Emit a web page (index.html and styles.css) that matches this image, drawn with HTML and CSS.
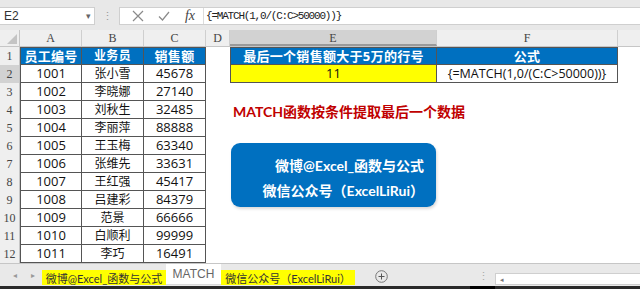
FILE: index.html
```html
<!DOCTYPE html>
<html lang="zh-CN">
  <head>
    <meta charset="utf-8" />
    <title>MATCH</title>
    <link rel="stylesheet" href="styles.css">
  </head>
  <body>
    <div class="formula-bar">
      <div class="name-box">
        <span>E2</span>
        <span class="caret">&#9662;</span>
      </div>
      <div class="grip">&#8942;</div>
      <div class="fx-box">
        <span class="icon">
          <svg width="14" height="14" viewBox="0 0 14 14"><path d="M2 2L12 12M12 2L2 12" stroke="#8a8a8a" stroke-width="1.2" fill="none"/></svg>
        </span>
        <span class="icon">
          <svg width="14" height="14" viewBox="0 0 14 14"><path d="M2 7.5L5.5 11L12 3" stroke="#8a8a8a" stroke-width="1.2" fill="none"/></svg>
        </span>
        <span class="fx">fx</span>
        <div class="formula">{=MATCH(1,0/(C:C&gt;50000))}</div>
      </div>
    </div>

    <div class="col-heads">
      <div class="corner"></div>
      <div class="col w-a">A</div>
      <div class="col w-a">B</div>
      <div class="col w-a">C</div>
      <div class="col w-d">D</div>
      <div class="col w-e selected">E</div>
      <div class="col w-f">F</div>
      <div class="col rest"></div>
    </div>

    <div class="sheet">
      <div class="left">
        <div class="rownum">1</div>
        <div class="cell head first-col top">员工编号</div>
        <div class="cell head top">业务员</div>
        <div class="cell head top">销售额</div>

        <div class="rownum selected">2</div>
        <div class="cell first-col">1001</div><div class="cell">张小雪</div><div class="cell">45678</div>
        <div class="rownum">3</div>
        <div class="cell first-col">1002</div><div class="cell">李晓娜</div><div class="cell">27140</div>
        <div class="rownum">4</div>
        <div class="cell first-col">1003</div><div class="cell">刘秋生</div><div class="cell">32485</div>
        <div class="rownum">5</div>
        <div class="cell first-col">1004</div><div class="cell">李丽萍</div><div class="cell">88888</div>
        <div class="rownum">6</div>
        <div class="cell first-col">1005</div><div class="cell">王玉梅</div><div class="cell">63340</div>
        <div class="rownum">7</div>
        <div class="cell first-col">1006</div><div class="cell">张维先</div><div class="cell">33631</div>
        <div class="rownum">8</div>
        <div class="cell first-col">1007</div><div class="cell">王红强</div><div class="cell">45417</div>
        <div class="rownum">9</div>
        <div class="cell first-col">1008</div><div class="cell">吕建彩</div><div class="cell">84379</div>
        <div class="rownum">10</div>
        <div class="cell first-col">1009</div><div class="cell">范景</div><div class="cell">66666</div>
        <div class="rownum">11</div>
        <div class="cell first-col">1010</div><div class="cell">白顺利</div><div class="cell">99999</div>
        <div class="rownum">12</div>
        <div class="cell first-col">1011</div><div class="cell">李巧</div><div class="cell">16491</div>
      </div>

      <div class="right">
        <div class="result">
          <div class="cell head first-col top">最后一个销售额大于5万的行号</div>
          <div class="cell head top">公式</div>
          <div class="cell first-col yellow">11</div>
          <div class="cell">{=MATCH(1,0/(C:C&gt;50000))}</div>
        </div>
        <div class="title">MATCH函数按条件提取最后一个数据</div>
        <div class="badge">
          <div>微博@Excel_函数与公式</div>
          <div>微信公众号（ExcelLiRui）</div>
        </div>
      </div>
    </div>

    <div class="tabs">
      <div class="nav">&#9666;</div>
      <div class="nav">&#9656;</div>
      <div class="tab marked">微博@Excel_函数与公式</div>
      <div class="tab active">MATCH</div>
      <div class="tab marked">微信公众号（ExcelLiRui）</div>
      <div class="add">
        <svg width="13" height="13" viewBox="0 0 13 13"><circle cx="6.5" cy="6.5" r="5.8" stroke="#777" fill="none"/><path d="M6.5 3.5V9.5M3.5 6.5H9.5" stroke="#555"/></svg>
      </div>
      <div class="dots">&#8942;</div>
      <div class="scroll"><span>&#9666;</span></div>
    </div>
    <div class="taskbar"><span class="seg"></span></div>
  </body>
</html>
```

FILE: styles.css
```css
body {
  margin: 0;
  width: 640px;
  height: 289px;
  overflow: hidden;
  background: #fff;
  font-family: Lato, "Noto Sans CJK SC", sans-serif;
}

/* formula bar */
.formula-bar {
  height: 30px;
  box-sizing: border-box;
  padding-top: 7px;
  display: flex;
  background: #e8e8e8;
}
.name-box {
  width: 95px;
  height: 18px;
  box-sizing: border-box;
  background: #fff;
  border: 1px solid #cfcfcf;
  border-left: none;
  display: flex;
  justify-content: space-between;
  align-items: center;
  padding: 0 3px 0 4px;
  font-family: "Liberation Sans", sans-serif;
  font-size: 12px;
  color: #333;
}
.caret {
  font-size: 9px;
  color: #666;
}
.grip {
  width: 24px;
  text-align: center;
  font-size: 11px;
  line-height: 18px;
  color: #999;
}
.fx-box {
  flex: 1;
  height: 18px;
  box-sizing: border-box;
  background: #fff;
  border: 1px solid #cfcfcf;
  border-right: none;
  display: flex;
  align-items: center;
}
.icon {
  width: 26px;
  display: flex;
  justify-content: center;
}
.icon:first-child {
  margin-left: 5px;
}
.fx {
  width: 26px;
  text-align: center;
  font-family: "Liberation Serif", serif;
  font-style: italic;
  font-size: 14px;
  color: #444;
}
.formula {
  height: 100%;
  border-left: 1px solid #dcdcdc;
  padding-left: 2px;
  font-family: "Liberation Mono", monospace;
  font-size: 11px;
  letter-spacing: -1.2px;
  line-height: 17px;
  color: #222;
}

/* column headings */
.col-heads {
  display: flex;
  height: 17px;
  background: #efefef;
  border-bottom: 1px solid #c6c6c6;
  box-sizing: border-box;
}
.corner {
  width: 20px;
  position: relative;
  border-right: 1px solid #c6c6c6;
  box-sizing: border-box;
}
.corner::after {
  content: "";
  position: absolute;
  right: 2px;
  bottom: 2px;
  border-left: 10px solid transparent;
  border-bottom: 10px solid #c4c4c4;
}
.col {
  box-sizing: border-box;
  border-right: 1px solid #cfcfcf;
  text-align: center;
  font-family: "Liberation Serif", serif;
  font-size: 12px;
  line-height: 16px;
  color: #444;
}
.w-a { width: 62px; }
.w-d { width: 24px; }
.w-e { width: 207px; }
.w-f { width: 181px; }
.rest { flex: 1; border-right: none; }
.col.selected {
  background: #d2d2d2;
  border-bottom: 2px solid #9a9a9a;
}

/* sheet */
.sheet {
  display: flex;
  height: 216px;
}
.left {
  display: grid;
  grid-template-columns: 20px 62px 62px 62px;
  grid-auto-rows: 18px;
}
.rownum {
  background: #efefef;
  border-right: 1px solid #c6c6c6;
  text-align: center;
  font-family: "Liberation Serif", serif;
  font-size: 12px;
  line-height: 18px;
  color: #444;
}
.rownum.selected {
  background: #d2d2d2;
}
.cell {
  box-sizing: border-box;
  border-right: 1px solid #555;
  border-bottom: 1px solid #555;
  text-align: center;
  font-family: "Open Sans", "Noto Sans CJK SC", sans-serif;
  font-size: 13px;
  line-height: 17px;
  color: #111;
  white-space: nowrap;
}
.left .cell:nth-child(4n+3) {
  font-size: 12px;
}
.cell.first-col { border-left: 1px solid #555; }
.cell.top { border-top: 1px solid #555; line-height: 16px; }
.cell.head {
  background: #0070c0;
  color: #fff;
  font-weight: bold;
  font-size: 13px;
  letter-spacing: 0.3px;
}
.cell.yellow { background: #ffff00; }

.right {
  margin-left: 24px;
  width: 388px;
}
.result {
  display: grid;
  grid-template-columns: 207px 181px;
  grid-auto-rows: 18px;
}
.result .cell:nth-child(4) {
  font-size: 12.5px;
}
.title {
  margin: 20px 0 0 3px;
  font-size: 14px;
  font-weight: bold;
  line-height: 18px;
  color: #c00000;
}
.badge {
  margin: 22px 0 0 1px;
  width: 205px;
  height: 64px;
  box-sizing: border-box;
  padding: 10px 12px 0 0;
  border-radius: 9px;
  background: #0070c0;
  color: #fff;
  font-weight: bold;
  font-size: 14px;
  line-height: 25px;
  text-align: right;
  box-shadow: 1px 2px 3px rgba(0, 0, 0, 0.15);
}

/* sheet tabs */
.tabs {
  height: 23px;
  box-sizing: border-box;
  border-top: 1px solid #c6c6c6;
  background: #e9e9e9;
  display: flex;
  align-items: stretch;
  font-size: 11px;
}
.nav {
  width: 18px;
  text-align: center;
  font-size: 8px;
  line-height: 22px;
  color: #999;
}
.nav:first-child { margin-left: 6px; }
.nav + .tab { margin-left: 18px; }
.tab {
  display: flex;
  align-items: center;
  justify-content: center;
  white-space: nowrap;
  color: #333;
}
.tab.marked {
  margin: 6px 0 1px;
  background: #ffff00;
  padding: 0 6px;
}
.tab.marked:nth-of-type(3) { width: 124px; box-sizing: border-box; }
.tab.marked:nth-of-type(5) { width: 134px; box-sizing: border-box; }
.tab.active {
  width: 55px;
  background: #fff;
  color: #666;
  font-family: "Liberation Sans", sans-serif;
  font-size: 12px;
  border-bottom: 1px solid #dadada;
  margin-bottom: 1px;
}
.add {
  margin-left: 20px;
  display: flex;
  align-items: center;
  padding-top: 3px;
}
.dots {
  margin-left: 90px;
  color: #aaa;
  line-height: 24px;
  font-size: 11px;
}
.scroll {
  margin: 9px 0 1px 6px;
  flex: 1;
  background: #fff;
  border: 1px solid #cfcfcf;
  border-right: none;
  font-size: 7px;
  line-height: 10px;
  color: #777;
  padding-left: 4px;
}
.taskbar {
  height: 3px;
  background: #2a2a2a;
  position: relative;
}
.taskbar .seg {
  position: absolute;
  left: 470px;
  top: 0;
  width: 25px;
  height: 3px;
  background: #000;
}
```
